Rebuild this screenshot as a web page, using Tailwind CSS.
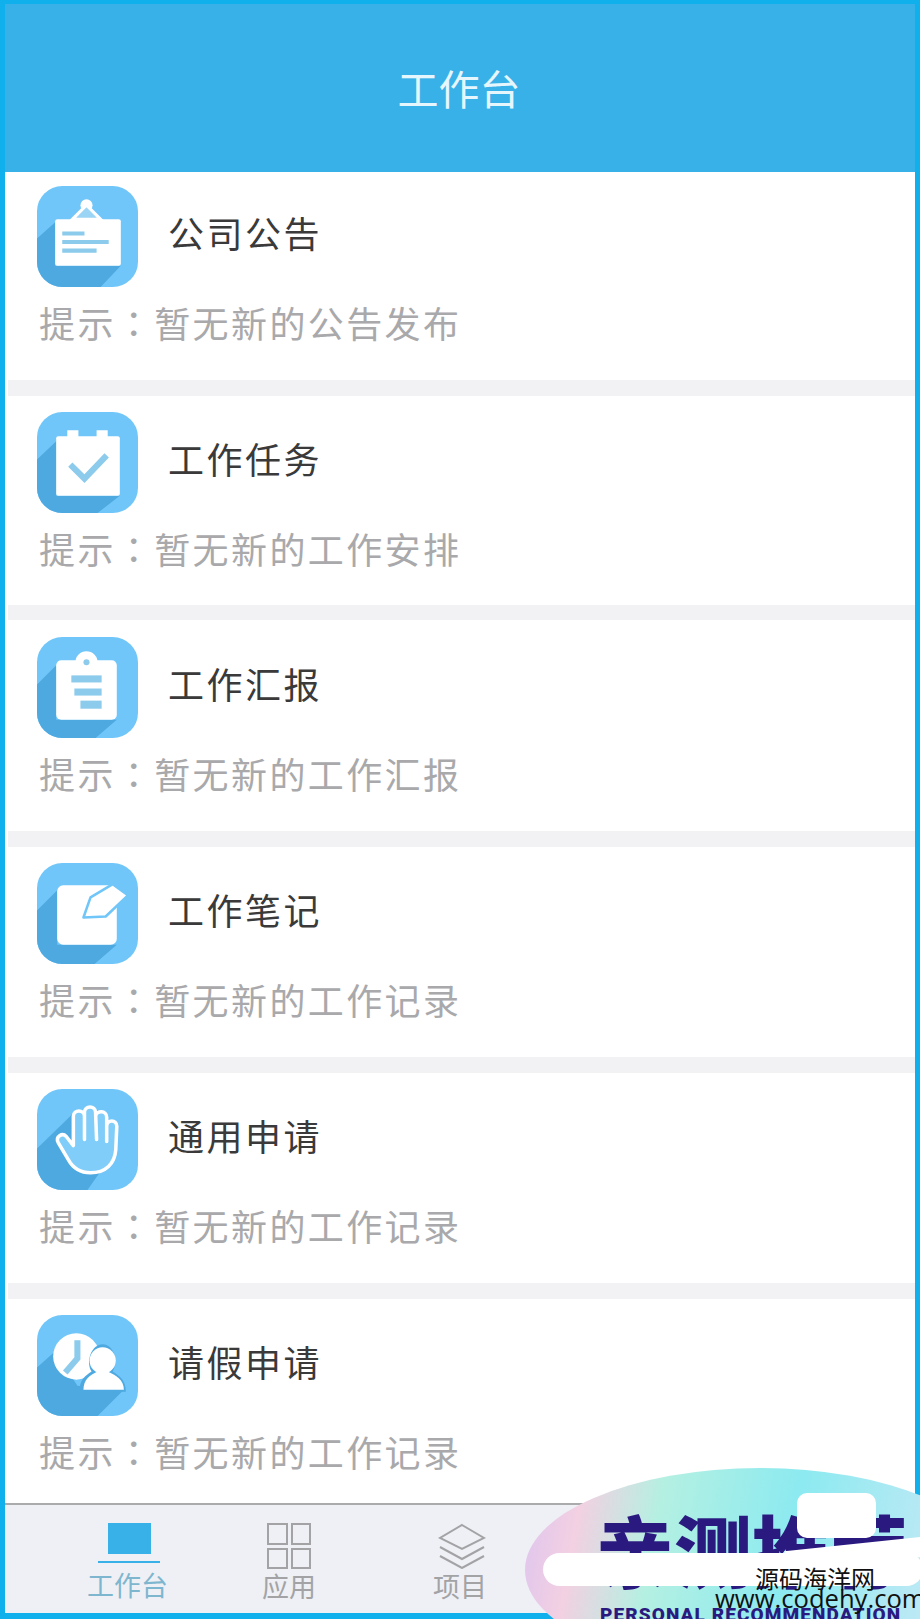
<!DOCTYPE html>
<html lang="zh-CN">
<head>
    <meta charset="UTF-8">
    <title>工作台</title>
    <script src="https://cdn.jsdelivr.net/npm/@tailwindcss/browser@4"></script>
</head>
<body class="bg-[#0fb0ec] font-['Noto_Sans_CJK_SC',sans-serif]">
<div class="relative w-[920px] h-[1619px] overflow-hidden">
<div class="w-full h-full border-x-[5px] border-t-[4px] border-b-[6px] border-[#0fb0ec] bg-white flex flex-col">

    <!-- Header -->
    <header class="h-[168px] shrink-0 bg-[#38b0e8] flex items-center justify-center pr-[2px]">
        <h1 class="text-[41px] leading-none text-[#e6f6fd] pb-[2px]">工作台</h1>
    </header>

    <!-- List -->
    <main class="flex-1 flex flex-col">
        <section class="h-[208px] pt-[14px] px-[32px]">
            <div class="flex items-center">
                <svg class="w-[101px] h-[101px] shrink-0" viewBox="0 0 100 100">
                    <defs><clipPath id="t1"><rect width="100" height="100" rx="25"/></clipPath></defs>
                    <g clip-path="url(#t1)">
                        <rect width="100" height="100" fill="#70c6f8"/>
                        <polygon points="0,52 18,36 18,79 83,79 63,100 0,100" fill="#4ea9e0"/>
                    </g>
                    <circle cx="49" cy="19" r="6" fill="#fff"/>
                    <path d="M49 19 L35 33 H63 Z" fill="#9bd5f5" stroke="#fff" stroke-width="3"/>
                    <rect x="18" y="33" width="65" height="46" rx="2" fill="#fff"/>
                    <path d="M25 47 H47 M25 55.5 H71 M25 64 H59" stroke="#8ccbec" stroke-width="4"/>
                </svg>
                <h2 class="ml-[30px] text-[36px] tracking-[2.5px] leading-none text-[#3a3a3a] pb-[9px]">公司公告</h2>
            </div>
            <p class="mt-[11px] ml-[2px] text-[36px] leading-[48px] tracking-[2.4px] text-[#a9a9ab]">提示<span lang="zh-TW" class="font-['Noto_Sans_CJK_TC']">：</span>暂无新的公告发布</p>
        </section>
        <div class="h-[16px] ml-[3px] bg-[#f2f2f4]"></div>

        <section class="h-[209px] pt-[16px] px-[32px]">
            <div class="flex items-center">
                <svg class="w-[101px] h-[101px] shrink-0" viewBox="0 0 100 100">
                    <defs><clipPath id="t2"><rect width="100" height="100" rx="25"/></clipPath></defs>
                    <g clip-path="url(#t2)">
                        <rect width="100" height="100" fill="#70c6f8"/>
                        <polygon points="0,47 19,29 19,83 82,83 60,100 0,100" fill="#4ea9e0"/>
                    </g>
                    <path d="M30 25 V18 H41 V25 Z M59 25 V18 H70 V25 Z" fill="#fff"/>
                    <rect x="19" y="24" width="63" height="59" rx="2" fill="#fff"/>
                    <path d="M33 52 L47 66 L69 43" fill="none" stroke="#8ccbec" stroke-width="6"/>
                </svg>
                <h2 class="ml-[30px] text-[36px] tracking-[2.5px] leading-none text-[#3a3a3a] pb-[9px]">工作任务</h2>
            </div>
            <p class="mt-[11px] ml-[2px] text-[36px] leading-[48px] tracking-[2.4px] text-[#a9a9ab]">提示<span lang="zh-TW" class="font-['Noto_Sans_CJK_TC']">：</span>暂无新的工作安排</p>
        </section>
        <div class="h-[15px] ml-[3px] bg-[#f2f2f4]"></div>

        <section class="h-[211px] pt-[17px] px-[32px]">
            <div class="flex items-center">
                <svg class="w-[101px] h-[101px] shrink-0" viewBox="0 0 100 100">
                    <defs><clipPath id="t3"><rect width="100" height="100" rx="25"/></clipPath></defs>
                    <g clip-path="url(#t3)">
                        <rect width="100" height="100" fill="#70c6f8"/>
                        <polygon points="0,47 19,28 19,82 79,82 58,100 0,100" fill="#4ea9e0"/>
                    </g>
                    <circle cx="49" cy="25" r="11" fill="#fff"/>
                    <rect x="19" y="23" width="60" height="59" rx="5" fill="#fff"/>
                    <circle cx="49" cy="25" r="3" fill="#8ccbec"/>
                    <rect x="34" y="38" width="30" height="7" fill="#8ccbec"/>
                    <rect x="37" y="51" width="27" height="7" fill="#8ccbec"/>
                    <rect x="43" y="63" width="21" height="8" fill="#8ccbec"/>
                </svg>
                <h2 class="ml-[30px] text-[36px] tracking-[2.5px] leading-none text-[#3a3a3a] pb-[9px]">工作汇报</h2>
            </div>
            <p class="mt-[11px] ml-[2px] text-[36px] leading-[48px] tracking-[2.4px] text-[#a9a9ab]">提示<span lang="zh-TW" class="font-['Noto_Sans_CJK_TC']">：</span>暂无新的工作汇报</p>
        </section>
        <div class="h-[16px] ml-[3px] bg-[#f2f2f4]"></div>

        <section class="h-[210px] pt-[16px] px-[32px]">
            <div class="flex items-center">
                <svg class="w-[101px] h-[101px] shrink-0" viewBox="0 0 100 100">
                    <defs><clipPath id="t4"><rect width="100" height="100" rx="25"/></clipPath></defs>
                    <g clip-path="url(#t4)">
                        <rect width="100" height="100" fill="#70c6f8"/>
                        <polygon points="0,47 20,27 20,81 79,81 57,100 0,100" fill="#4ea9e0"/>
                    </g>
                    <rect x="20" y="22" width="59" height="59" rx="6" fill="#fff"/>
                    <path d="M46 54 L53 34 L75 21 L90 32 L68 53 Z" fill="#fff" stroke="#70c6f8" stroke-width="2.5" stroke-linejoin="round"/>
                </svg>
                <h2 class="ml-[30px] text-[36px] tracking-[2.5px] leading-none text-[#3a3a3a] pb-[9px]">工作笔记</h2>
            </div>
            <p class="mt-[11px] ml-[2px] text-[36px] leading-[48px] tracking-[2.4px] text-[#a9a9ab]">提示<span lang="zh-TW" class="font-['Noto_Sans_CJK_TC']">：</span>暂无新的工作记录</p>
        </section>
        <div class="h-[16px] ml-[3px] bg-[#f2f2f4]"></div>

        <section class="h-[210px] pt-[16px] px-[32px]">
            <div class="flex items-center">
                <svg class="w-[101px] h-[101px] shrink-0" viewBox="0 0 100 100">
                    <defs><clipPath id="t5"><rect width="100" height="100" rx="25"/></clipPath></defs>
                    <g clip-path="url(#t5)">
                        <rect width="100" height="100" fill="#70c6f8"/>
                        <polygon points="0,59 36,24 78,60 50,100 0,100" fill="#4ea9e0"/>
                    </g>
                    <path d="M36 56 V27 C36 20 47 20 47 27 V23 C47 16 58 16 58 23 V27 C59 21 69 21 69 28 V37 C69 30 79 30 79 37 L78 60 C77 74 68 83 53 83 C43 83 36 79 31 70 L21 53 C18 47 25 43 29 47 Z" fill="#7fcdf8"/>
                    <path d="M36 56 V27 C36 20 47 20 47 27 L47 50 M47 27 V23 C47 16 58 16 58 23 L59 50 M58 27 C59 21 69 21 69 28 V52 M69 37 C69 30 79 30 79 37 L78 60 C77 74 68 83 53 83 C43 83 36 79 31 70 L21 53 C18 47 25 43 29 47 L36 56" fill="none" stroke="#fff" stroke-width="3.5" stroke-linecap="round" stroke-linejoin="round"/>
                </svg>
                <h2 class="ml-[30px] text-[36px] tracking-[2.5px] leading-none text-[#3a3a3a] pb-[9px]">通用申请</h2>
            </div>
            <p class="mt-[11px] ml-[2px] text-[36px] leading-[48px] tracking-[2.4px] text-[#a9a9ab]">提示<span lang="zh-TW" class="font-['Noto_Sans_CJK_TC']">：</span>暂无新的工作记录</p>
        </section>
        <div class="h-[16px] ml-[3px] bg-[#f2f2f4]"></div>

        <section class="flex-1 pt-[16px] px-[32px]">
            <div class="flex items-center">
                <svg class="w-[101px] h-[101px] shrink-0" viewBox="0 0 100 100">
                    <defs><clipPath id="t6"><rect width="100" height="100" rx="25"/></clipPath></defs>
                    <g clip-path="url(#t6)">
                        <rect width="100" height="100" fill="#70c6f8"/>
                        <polygon points="0,52 18,36 40,70 86,74 60,100 0,100" fill="#4ea9e0"/>
                    </g>
                    <circle cx="39" cy="41" r="23" fill="#fff"/>
                    <path d="M40 25 V43 L28 57" fill="none" stroke="#8ccbec" stroke-width="6"/>
                    <path d="M42 76 C42 64 48 60 54 56 C48 46 54 29 65 29 C76 29 81 46 75 56 C81 60 88 64 88 76 Z" fill="#4ea9e0"/>
                    <circle cx="65" cy="45" r="13" fill="#fff"/>
                    <path d="M46 74 C46 64 52 60 60 56 H70 C78 60 86 64 86 74 Z" fill="#fff"/>
                </svg>
                <h2 class="ml-[30px] text-[36px] tracking-[2.5px] leading-none text-[#3a3a3a] pb-[9px]">请假申请</h2>
            </div>
            <p class="mt-[11px] ml-[2px] text-[36px] leading-[48px] tracking-[2.4px] text-[#a9a9ab]">提示<span lang="zh-TW" class="font-['Noto_Sans_CJK_TC']">：</span>暂无新的工作记录</p>
        </section>
    </main>

    <!-- Tab bar -->
    <nav class="h-[110px] shrink-0 border-t-2 border-[#a9abad] bg-[#eef0f5] flex pl-[42px]">
        <a class="w-[161px] flex flex-col items-center pt-[18px]">
            <div class="w-[62px] flex flex-col items-center ml-[3px]">
                <div class="w-[43px] h-[31px] bg-[#38b0e8]"></div>
                <div class="w-[62px] h-[2px] bg-[#38b0e8] mt-[7px]"></div>
            </div>
            <span class="mt-[7px] text-[27px] leading-[30px] text-[#7fb6cf]">工作台</span>
        </a>
        <a class="w-[162px] flex flex-col items-center pt-[18px]">
            <div class="w-[44px] h-[46px] grid grid-cols-2 grid-rows-2 gap-[3px]">
                <div class="border-2 border-[#a3a3a5]"></div>
                <div class="border-2 border-[#a3a3a5]"></div>
                <div class="border-2 border-[#a3a3a5]"></div>
                <div class="border-2 border-[#a3a3a5]"></div>
            </div>
            <span class="mt-[2px] text-[27px] leading-[30px] text-[#a3a3a5]">应用</span>
        </a>
        <a class="w-[180px] flex flex-col items-center pt-[18px]">
            <svg class="w-[48px] h-[46px] ml-[4px]" viewBox="0 0 48 46">
                <path d="M24 2 L46 15 L24 26 L2 15 Z M2 24 L24 36 L46 24 M2 33 L24 45 L46 33" fill="none" stroke="#a3a3a5" stroke-width="2"/>
            </svg>
            <span class="mt-[2px] text-[27px] leading-[30px] text-[#a3a3a5]">项目</span>
        </a>
    </nav>
</div>

    <!-- Sticker over the corner of the screenshot -->
    <div class="absolute left-[525px] top-[1468px] w-[470px] h-[204px] rounded-[50%] bg-[linear-gradient(100deg,#dcc4f0_0%,#f3d0e2_12%,#b4f0e2_28%,#8ceaf0_55%,#bfe9f5_85%)]"></div>
    <div class="absolute left-[596px] top-[1506px] text-[78px] leading-[84px] font-black text-[#2a1a80] whitespace-nowrap">亲测推荐</div>
    <div class="absolute left-[797px] top-[1493px] w-[79px] h-[45px] rounded-[10px] bg-white"></div>
    <div class="absolute left-[543px] top-[1553px] w-[380px] h-[33px] rounded-full bg-white"></div>
    <div class="absolute left-[785px] top-[1544px] w-[140px] h-[20px] -rotate-6 bg-white"></div>
    <div class="absolute left-[600px] top-[1604px] text-[19px] leading-[22px] font-black tracking-[1.1px] text-[#2a1a80] whitespace-nowrap font-['Roboto',sans-serif]">PERSONAL RECOMMENDATION</div>
    <div class="absolute left-[755px] top-[1563px] text-[24px] leading-[30px] text-[#111] whitespace-nowrap">源码海洋网</div>
    <div class="absolute left-[715px] top-[1581px] text-[25.6px] leading-[36px] text-[#111] whitespace-nowrap font-['Open_Sans',sans-serif]">www.codehy.com</div>
</div>
</body>
</html>
